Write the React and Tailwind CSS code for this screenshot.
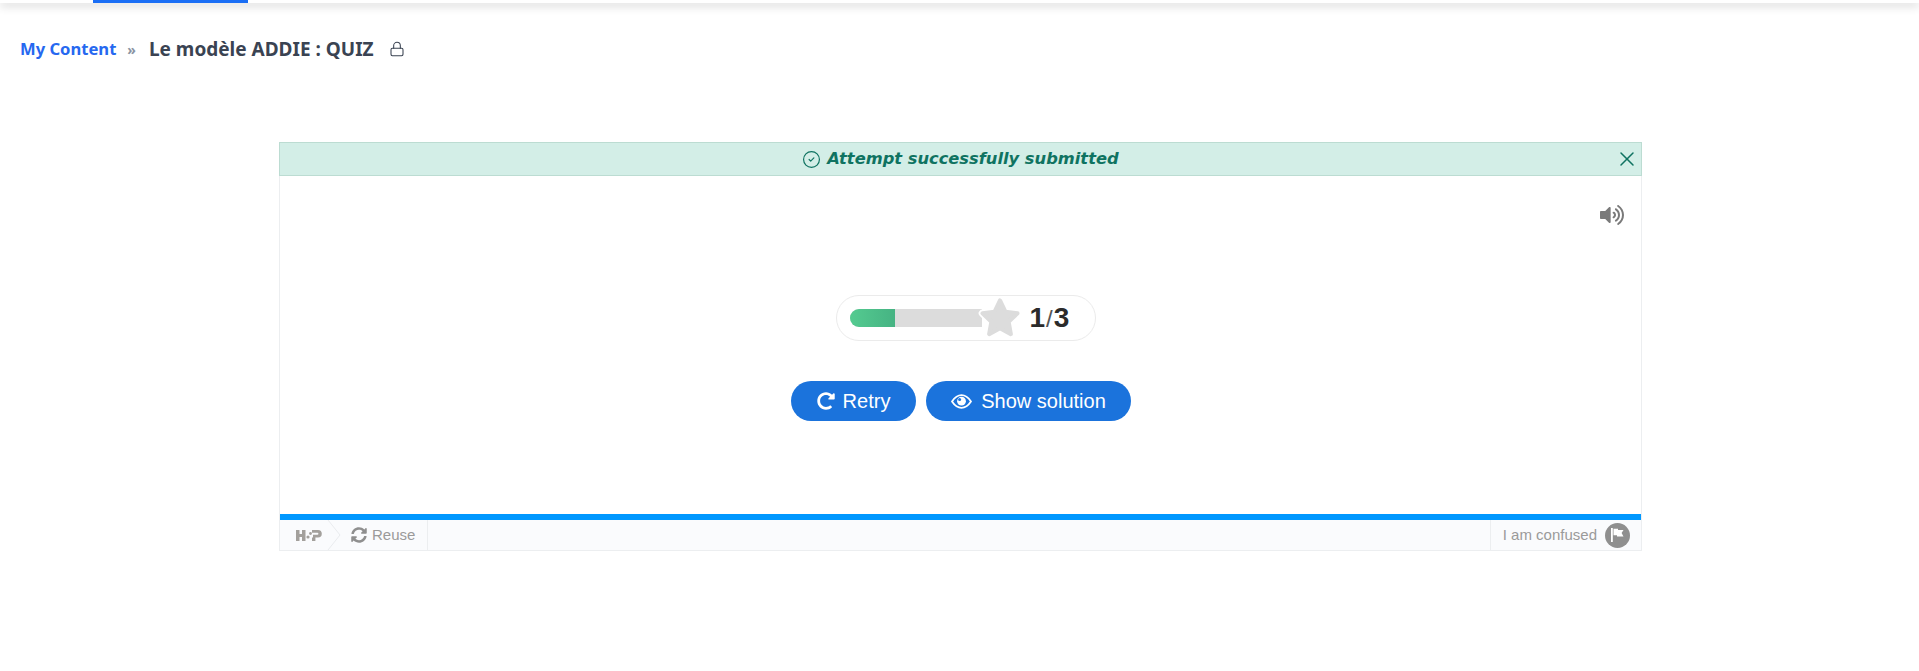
import React from "react";
import { FaVolumeUp, FaRedoAlt, FaSyncAlt } from "react-icons/fa";
import { X, Lock, CircleCheck } from "lucide-react";

function H5pLogo() {
  return (
    <svg width="26" height="11" viewBox="0 0 26 11" className="text-[#a3a09c]" fill="currentColor">
      <rect x="0" y="0" width="3.5" height="11" />
      <rect x="6" y="0" width="3.5" height="11" />
      <rect x="3" y="4" width="4" height="3" />
      <circle cx="12" cy="7" r="1.6" />
      <circle cx="14.5" cy="3.5" r="1.4" />
      <path d="M16 0h6a3.8 3.8 0 0 1 0 7.6h-2.6V11H16V7.4h1V4.8h4.4a1 1 0 0 0 0-2H16z" />
    </svg>
  );
}

function EyeIcon() {
  return (
    <svg width="21" height="15" viewBox="0 0 21 15">
      <path d="M1 7.5 C4 3 7 1.2 10.5 1.2 S17 3 20 7.5 C17 12 14 13.8 10.5 13.8 S4 12 1 7.5 Z" fill="none" stroke="#ffffff" strokeWidth="1.8" />
      <circle cx="10.5" cy="7.2" r="4.4" fill="#ffffff" />
      <circle cx="8.6" cy="5.4" r="1.5" fill="#1b73dc" />
    </svg>
  );
}

function FlagIcon() {
  return (
    <svg width="13" height="14" viewBox="0 0 13 14" fill="#ffffff">
      <rect x="0" y="0" width="1.8" height="14" />
      <path d="M2.5 0.8 H7 V2 H12.5 L10.6 5 L12.5 8.4 H6 V7.2 H2.5 Z" />
    </svg>
  );
}

const STAR = "M18 3 L22.6 12.6 L33 14 L25.4 21.3 L27.3 31.8 L18 26.7 L8.7 31.8 L10.6 21.3 L3 14 L13.4 12.6 Z";

export default function App() {
  return (
    <div className="min-h-[671px] bg-white font-['Liberation_Sans',sans-serif]">
      <div className="h-[3px] bg-white shadow-[0_2px_10px_rgba(0,0,0,0.3)]">
        <div className="ml-[93px] h-[3px] w-[155px] bg-[#1a6ef5]" />
      </div>

      <nav className="mt-[34px] flex h-[24px] items-center pl-[20px] font-['Noto_Sans',sans-serif]">
        <span className="text-[16.6px] font-bold text-[#2668f0]">My Content</span>
        <span className="ml-[11px] text-[14px] font-bold text-[#8a94a3]">»</span>
        <span className="ml-[13px] text-[19px] font-bold text-[#3a4352]">Le modèle ADDIE : QUIZ</span>
        <Lock className="ml-[15px] text-[#3a4352]" size={16} strokeWidth={1.6} />
      </nav>

      <main className="ml-[279px] mt-[81px] w-[1363px]">
        <div className="relative flex h-[34px] items-center justify-center border border-[#bcdcd2] bg-[#d3eee7] text-[#0f7361]">
          <CircleCheck size={19} strokeWidth={1.5} />
          <span className="ml-[6px] font-['DejaVu_Sans',sans-serif] text-[16.3px] font-bold italic">
            Attempt successfully submitted
          </span>
          <X className="absolute right-[2px] top-[4px]" size={24} strokeWidth={1.5} />
        </div>

        <div className="border-x border-b border-[#eceef0]">
          <div className="relative h-[338px]">
            <FaVolumeUp className="absolute right-[17px] top-[27px] text-[#7a7a7a]" size={24} />

            <div className="flex flex-col items-center pt-[119px]">
              <div className="ml-[10px] flex h-[46px] w-[260px] items-center rounded-[23px] border border-[#ebebeb] pl-[13px]">
                <div className="relative h-[18px] w-[132px] rounded-l-[9px] bg-[#dcdcdc]">
                  <div className="h-full w-[45px] rounded-l-[9px] bg-gradient-to-r from-[#54cb90] to-[#46b383]" />
                  <svg width="42" height="42" viewBox="0 0 36 36" className="absolute -top-[12px] left-[129px]" overflow="visible">
                    <path d={STAR} fill="#ffffff" stroke="#ffffff" strokeWidth="6.5" strokeLinejoin="round" />
                    <path d={STAR} fill="#dcdcdc" stroke="#dcdcdc" strokeWidth="3.5" strokeLinejoin="round" />
                  </svg>
                </div>
                <div className="ml-[48px] flex items-baseline text-[28px] font-bold leading-none text-[#2b2b2b]">
                  <span>1</span>
                  <span className="mx-[1px] text-[24px] font-normal text-[#555]">/</span>
                  <span>3</span>
                </div>
              </div>

              <div className="ml-[1px] mt-[40px] flex gap-[10px] text-[20px] text-white">
                <button className="flex h-[40px] w-[125px] items-center justify-center gap-[8px] rounded-[20px] bg-[#1b73dc]">
                  <FaRedoAlt size={18} />
                  <span>Retry</span>
                </button>
                <button className="flex h-[40px] w-[205px] items-center justify-center gap-[9px] rounded-[20px] bg-[#1b73dc]">
                  <EyeIcon />
                  <span>Show solution</span>
                </button>
              </div>
            </div>
          </div>

          <div className="h-[6px] bg-[#0098ff]" />

          <footer className="flex h-[30px] items-center justify-between bg-[#fafbfd] text-[15px] text-[#9a9a9a]">
            <div className="flex h-full items-center">
              <div className="ml-[16px]"><H5pLogo /></div>
              <svg width="14" height="30" viewBox="0 0 14 30" className="ml-[5px]" fill="none" stroke="#e9ebee">
                <path d="M1 0 L13 15 L1 30" />
              </svg>
              <div className="flex h-full items-center border-r border-[#eceef0] pl-[10px] pr-[12px]">
                <FaSyncAlt size={16} className="text-[#8f8f8f]" />
                <span className="ml-[5px]">Reuse</span>
              </div>
            </div>
            <div className="flex h-full items-center border-l border-[#eceef0] pl-[12px] pr-[11px]">
              <span>I am confused</span>
              <span className="ml-[8px] flex h-[25px] w-[25px] items-center justify-center rounded-full bg-[#8f8f8f]">
                <FlagIcon />
              </span>
            </div>
          </footer>
        </div>
      </main>
    </div>
  );
}
